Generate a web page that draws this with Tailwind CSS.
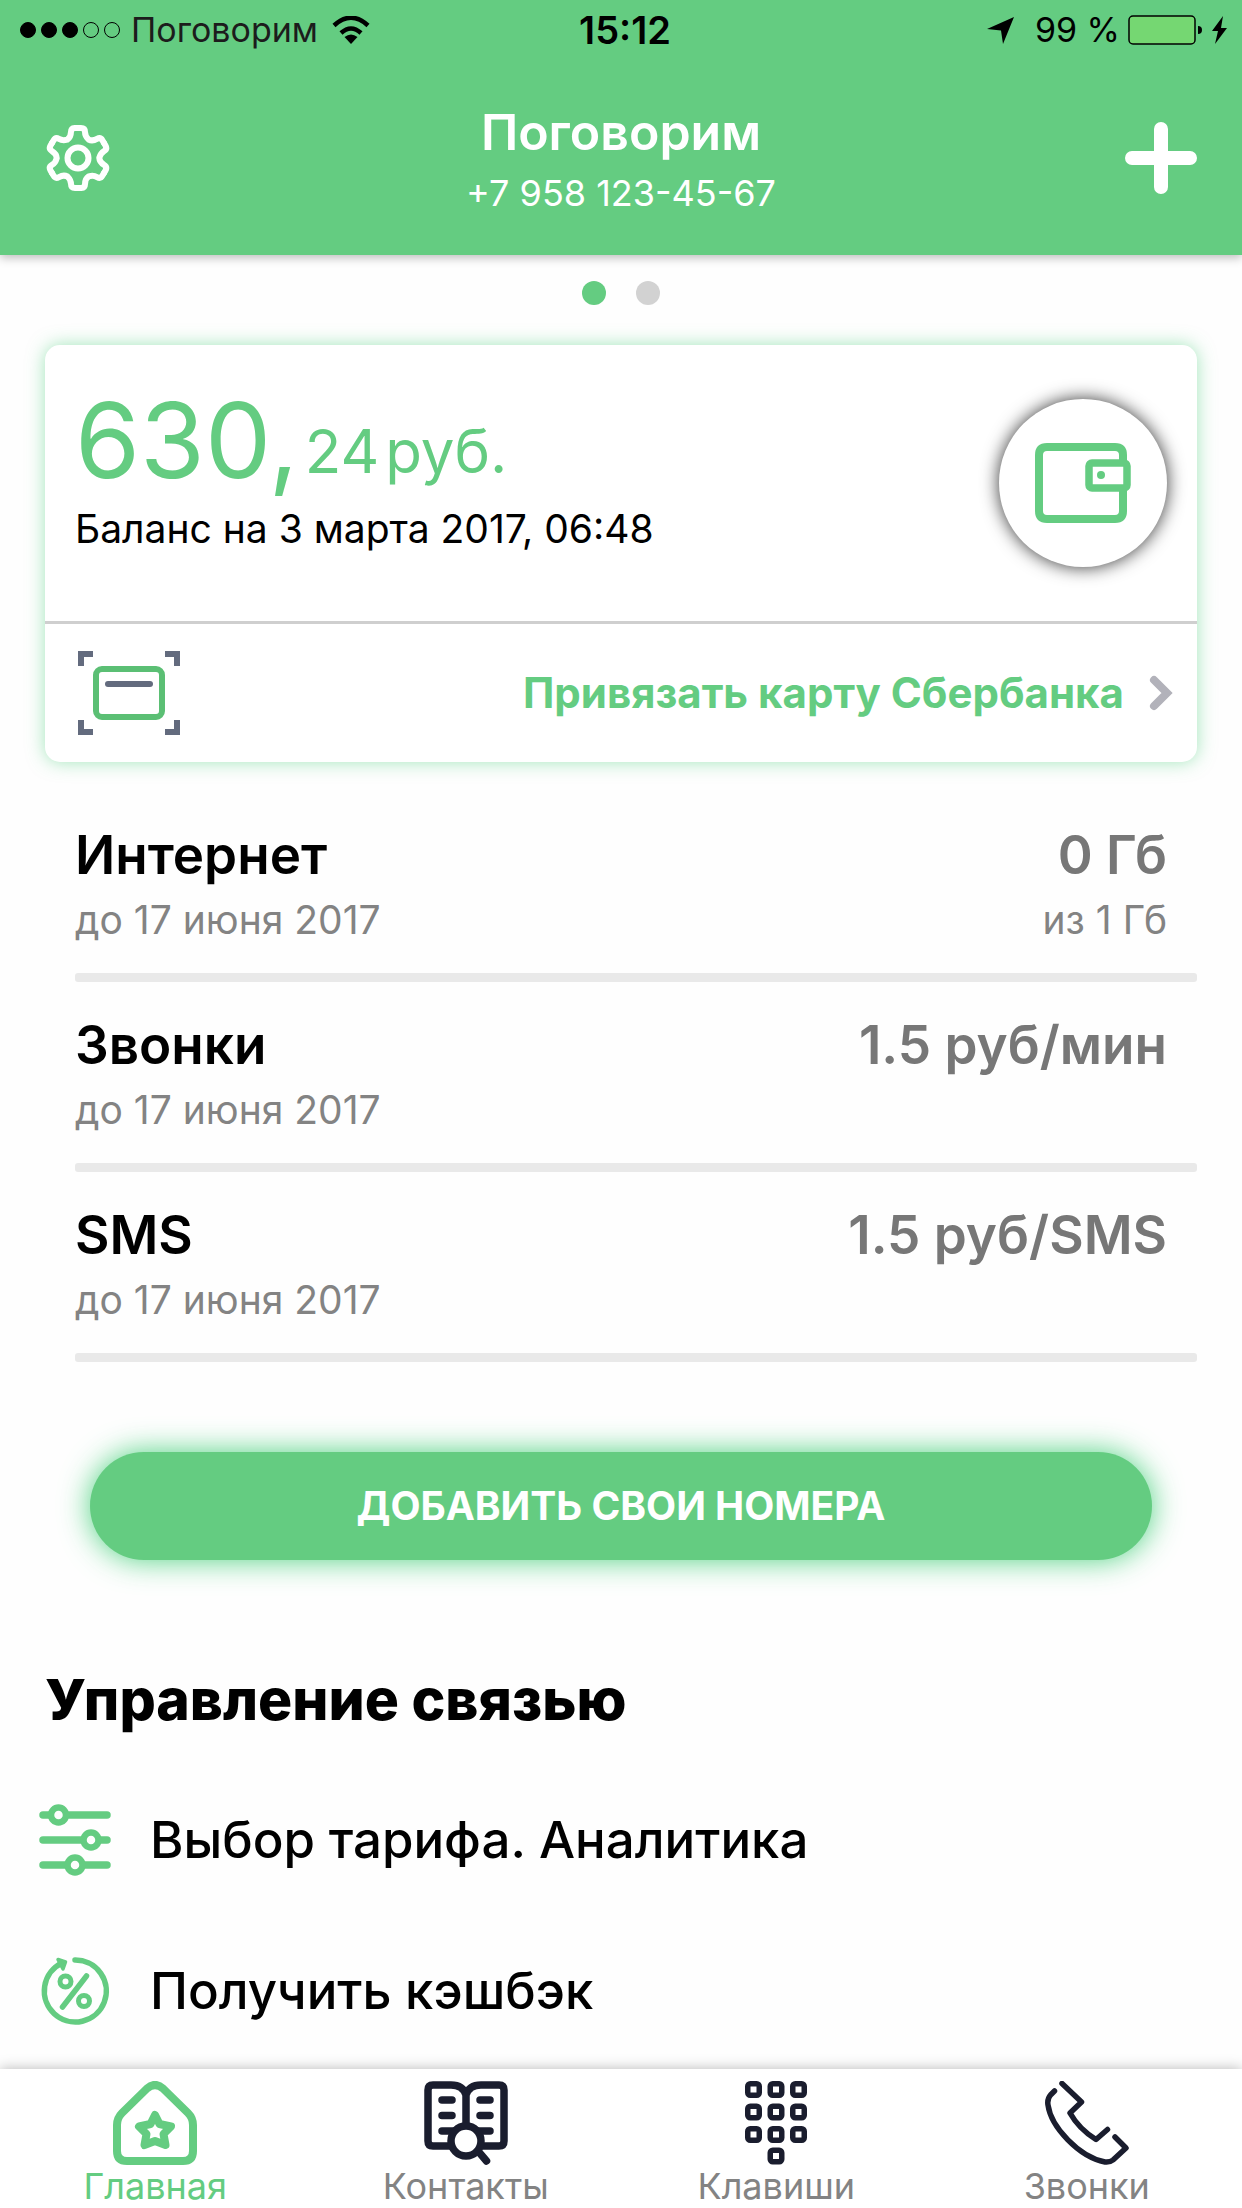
<!DOCTYPE html>
<html lang="ru">
<head>
<meta charset="utf-8">
<meta name="viewport" content="width=device-width, initial-scale=1">
<title>Поговорим</title>
<script src="https://cdn.jsdelivr.net/npm/@tailwindcss/browser@4"></script>
</head>
<body class="flex min-h-screen flex-col bg-[#fefefe] font-['Inter',sans-serif] text-black">

<header class="bg-[#64cc81] shadow-[0_3px_9px_rgba(0,0,0,0.25)]">
  <!-- Status bar -->
  <div class="grid h-[60px] grid-cols-3 items-center pr-3 pl-5 text-[34px] leading-[44px]">
    <div class="flex items-center gap-[10px]">
      <svg class="h-4 w-[101px]" viewBox="0 0 101 16" aria-hidden="true">
        <g stroke="#000"><circle cx="8" cy="8" r="7.5"/><circle cx="29" cy="8" r="7.5"/><circle cx="50" cy="8" r="7.5"/><circle cx="71" cy="8" r="7.5" fill="none"/><circle cx="92" cy="8" r="7.5" fill="none"/></g>
      </svg>
      <span class="text-[#1c1c1c]">Поговорим</span>
      <svg class="ml-1 h-7 w-[38px]" viewBox="0 0 38 28" aria-hidden="true">
        <path d="M2 9.5Q19-6 36 9.5M9 17Q19 8 29 17" fill="none" stroke="#000" stroke-width="4.500"/>
        <path d="M19 28l-6.500-7q6.500-5 13 0z"/>
      </svg>
    </div>
    <div class="text-center text-[38px] font-semibold">15:12</div>
    <div class="flex items-center justify-end">
      <svg class="mr-5 h-[27px] w-7" viewBox="0 0 28 27" aria-hidden="true"><path d="M27 0L16 27 14 13.500 0 12z"/></svg>
      <span>99 %</span>
      <svg class="mr-0.5 ml-2 h-[30px] w-[100px]" viewBox="0 0 100 30" aria-hidden="true">
        <rect x="1" y="1" width="66" height="28" rx="4" fill="#75d772" stroke="#000" stroke-width="1.500"/>
        <path d="M70 11q4 0 4 4t-4 4z"/>
        <path d="M95 1L84 16h6l-3 13 12-16h-6z"/>
      </svg>
    </div>
  </div>
  <!-- Title bar -->
  <div class="flex h-[195px] items-center justify-between px-[45px] text-white">
    <button type="button" aria-label="Настройки" class="w-[72px]">
      <svg class="h-[66px] w-[66px]" viewBox="-33 -33 66 66" fill="none" stroke="#fff" stroke-width="6" stroke-linecap="round" stroke-linejoin="round">
        <g id="tooth"><path d="M0-30H3Q7-30 7-26C7-22 9-20 10.500-18.500C12.500-17.500 15.500-17.100 19-19.100Q22.500-21 24.500-17.600L26-15"/></g>
        <use href="#tooth" transform="rotate(60)"/><use href="#tooth" transform="rotate(120)"/><use href="#tooth" transform="rotate(180)"/><use href="#tooth" transform="rotate(240)"/><use href="#tooth" transform="rotate(300)"/>
        <circle r="10.500"/>
      </svg>
    </button>
    <div class="text-center">
      <h1 class="text-[50px] leading-[64px] font-semibold">Поговорим</h1>
      <p class="mt-[7px] text-[36px] leading-[44px]">+7 958 123-45-67</p>
    </div>
    <button type="button" aria-label="Добавить">
      <svg class="size-[72px]" viewBox="0 0 72 72" stroke="#fff" stroke-width="14" stroke-linecap="round"><path d="M36 7V65M7 36H65"/></svg>
    </button>
  </div>
</header>

<main>
  <div class="flex justify-center gap-[30px] pt-[26px]">
    <span class="size-6 rounded-full bg-[#64cc81]"></span>
    <span class="size-6 rounded-full bg-[#d2d2d2]"></span>
  </div>

  <!-- Balance card -->
  <section class="mx-[45px] mt-10 rounded-[15px] bg-white shadow-[0_0_18px_rgba(70,205,120,0.5)]">
    <div class="flex items-center justify-between border-b-3 border-[#cfcfcf] px-[30px]">
      <div class="pt-[42px] pb-17">
        <div class="flex items-end text-[#64cc81]">
          <span class="text-[105px] leading-[106px]">630,</span>
          <span class="ml-1.5 text-[60px] leading-[84px]">24</span>
          <span class="ml-1.5 text-[60px] leading-[84px]">руб.</span>
        </div>
        <p class="mt-3 text-[39px] leading-[48px]">Баланс на 3 марта 2017, 06:48</p>
      </div>
      <button type="button" aria-label="Пополнить" class="flex size-[168px] shrink-0 items-center justify-center rounded-full bg-white shadow-[0_0_18px_rgba(0,0,0,0.8)]">
        <svg class="h-20 w-24" viewBox="0 0 96 80" fill="none" stroke="#64cc81" stroke-width="8">
          <path d="M88 20V12Q88 4 80 4H12Q4 4 4 12V68Q4 76 12 76H80Q88 76 88 68V45"/>
          <rect x="54" y="20" width="38" height="25" rx="3" stroke-width="7.500"/>
          <circle cx="66" cy="32" r="4" fill="#64cc81" stroke="none"/>
        </svg>
      </button>
    </div>
    <a href="#" class="flex items-center justify-between py-[27px] pr-6 pl-[33px]">
      <svg class="h-[84px] w-[102px]" viewBox="0 0 102 84" fill="none" aria-hidden="true">
        <path d="M3 15V3H15M87 3H99V15M99 69V81H87M15 81H3V69" stroke="#636b7e" stroke-width="6"/>
        <rect x="18" y="18" width="66" height="48" rx="6" stroke="#5bbf74" stroke-width="6"/>
        <path d="M30 33H72" stroke="#636b7e" stroke-width="6" stroke-linecap="round"/>
      </svg>
      <span class="flex items-center gap-[25px]">
        <span class="text-[42px] leading-[56px] font-bold text-[#64cc81]">Привязать карту Сбербанка</span>
        <svg class="h-9 w-6" viewBox="0 0 24 36" fill="none" stroke="#b2b2ba" stroke-width="8" stroke-linecap="round" aria-hidden="true"><path d="M5 5L18 18 5 31"/></svg>
      </span>
    </a>
  </section>

  <!-- Remaining packages -->
  <ul class="mt-[30px] mr-[45px] ml-[75px]">
    <li>
      <div class="flex justify-between pt-[31px] pr-[30px] pb-[29px]">
        <div><h2 class="text-[53px] leading-[64px] font-semibold">Интернет</h2><p class="mt-[9px] text-[39px] leading-[48px] text-[#838383]">до 17 июня 2017</p></div>
        <div class="text-right"><p class="text-[53px] leading-[64px] font-semibold text-[#777]">0 Гб</p><p class="mt-[9px] text-[39px] leading-[48px] text-[#838383]">из 1 Гб</p></div>
      </div>
      <div class="h-[9px] rounded-[3px] bg-[#e9e9e9]"></div>
    </li>
    <li>
      <div class="flex justify-between pt-[31px] pr-[30px] pb-[29px]">
        <div><h2 class="text-[53px] leading-[64px] font-semibold">Звонки</h2><p class="mt-[9px] text-[39px] leading-[48px] text-[#838383]">до 17 июня 2017</p></div>
        <p class="text-[53px] leading-[64px] font-semibold text-[#777]">1.5 руб/мин</p>
      </div>
      <div class="h-[9px] rounded-[3px] bg-[#e9e9e9]"></div>
    </li>
    <li>
      <div class="flex justify-between pt-[31px] pr-[30px] pb-[29px]">
        <div><h2 class="text-[53px] leading-[64px] font-semibold">SMS</h2><p class="mt-[9px] text-[39px] leading-[48px] text-[#838383]">до 17 июня 2017</p></div>
        <p class="text-[53px] leading-[64px] font-semibold text-[#777]">1.5 руб/SMS</p>
      </div>
      <div class="h-[9px] rounded-[3px] bg-[#e9e9e9]"></div>
    </li>
  </ul>

  <div class="mt-[90px] flex px-[90px]">
    <button type="button" class="h-[108px] grow rounded-full bg-[#64cc81] text-[39px] font-bold text-white shadow-[0_0_30px_rgba(60,205,115,0.9)]">ДОБАВИТЬ СВОИ НОМЕРА</button>
  </div>

  <!-- Service management -->
  <h2 class="mx-[45px] mt-[106px] text-[57px] leading-[68px] font-extrabold">Управление связью</h2>
  <nav class="mx-[39px] mt-[70px] flex flex-col gap-[79px] pb-[42px] text-[51px] leading-[72px] font-medium">
    <a href="#" class="flex items-center gap-[39px]">
      <svg class="size-[72px]" viewBox="0 0 72 72" fill="none" stroke="#64cc81" stroke-width="7.500" stroke-linecap="round" aria-hidden="true">
        <path d="M4 11H10M30 11H68M4 36H42M62 36H68M4 61H26M46 61H68"/>
        <g stroke-width="6.500"><circle cx="19.500" cy="11" r="7.500"/><circle cx="52" cy="36" r="7.500"/><circle cx="36" cy="61" r="7.500"/></g>
      </svg>
      <span>Выбор тарифа. Аналитика</span>
    </a>
    <a href="#" class="flex items-center gap-[39px]">
      <svg class="size-[72px]" viewBox="0 0 72 72" fill="none" stroke="#64cc81" stroke-width="5.500" stroke-linecap="round" stroke-linejoin="round" aria-hidden="true">
        <path d="M36 5A31 31 0 1 1 23 8"/>
        <path d="M19 4.500L26.500 7 24 14z" fill="#64cc81" stroke-width="3.500"/>
        <path d="M47.500 21L23.500 52"/>
        <g stroke-width="5"><circle cx="26.500" cy="26.500" r="5.500"/><circle cx="45" cy="46" r="5.500"/></g>
      </svg>
      <span>Получить кэшбэк</span>
    </a>
  </nav>
</main>

<!-- Tab bar -->
<nav class="sticky bottom-0 mt-auto grid grid-cols-4 bg-white pt-3 text-[36px] leading-[43px] text-[#838383] shadow-[0_-1px_12px_rgba(0,0,0,0.25)]">
  <a href="#" class="flex flex-col items-center text-[#64cc81]">
    <svg class="size-[84px]" viewBox="0 0 84 84" fill="none" stroke="#64cc81" stroke-width="8" stroke-linejoin="round" aria-hidden="true">
      <path d="M4 44Q4 37 9 32L34 7.500Q42 .5 50 7.500L75 32Q80 37 80 44V70Q80 80 70 80H14Q4 80 4 70Z"/>
      <path d="M42 34L46.500 43 58 45.500 50.500 53 52.500 64 42 60 31.500 64 33.500 53 26 45.500 37.500 43Z"/>
    </svg>
    <span>Главная</span>
  </a>
  <a href="#" class="flex flex-col items-center">
    <svg class="size-[84px]" viewBox="0 0 84 84" fill="none" stroke="#1a1d2e" stroke-width="7.500" stroke-linecap="round" stroke-linejoin="round" aria-hidden="true">
      <path d="M42 42V14Q39 4 27 4H9Q4 4 4 9V60Q4 65 9 65H28M42 14Q45 4 57 4H75Q80 4 80 9V60Q80 65 75 65H56"/>
      <path d="M18 19H28M18 34.500H28M18 50H30M56 19H66M56 34.500H66M54 50H66M54 70L62.500 80"/>
      <circle cx="42" cy="60" r="15" fill="#fff"/>
    </svg>
    <span>Контакты</span>
  </a>
  <a href="#" class="flex flex-col items-center">
    <svg class="h-[84px] w-[62px]" viewBox="0 0 62 84" fill="none" stroke="#1a1d2e" stroke-width="5.500" aria-hidden="true">
      <g id="keys"><rect x="2.750" y="2.750" width="11.500" height="11.500" rx="2.500"/><rect x="25.250" y="2.750" width="11.500" height="11.500" rx="2.500"/><rect x="47.750" y="2.750" width="11.500" height="11.500" rx="2.500"/></g>
      <use href="#keys" y="22.500"/><use href="#keys" y="45"/>
      <rect x="25.250" y="69.250" width="11.500" height="11.500" rx="2.500"/>
    </svg>
    <span>Клавиши</span>
  </a>
  <a href="#" class="flex flex-col items-center">
    <svg class="size-[84px]" viewBox="0 0 84 84" fill="none" stroke="#1a1d2e" stroke-width="5.500" stroke-linecap="round" stroke-linejoin="round" aria-hidden="true">
      <path d="M9.500 10L5.500 14Q2 18 3 24C6 46 34 76 60 81Q65 81.500 68 79L81 67 70 56"/>
      <path d="M17 2.500L36.500 21 25 32Q34 48 51 58.500L62.500 48.500"/>
    </svg>
    <span>Звонки</span>
  </a>
</nav>

</body>
</html>
